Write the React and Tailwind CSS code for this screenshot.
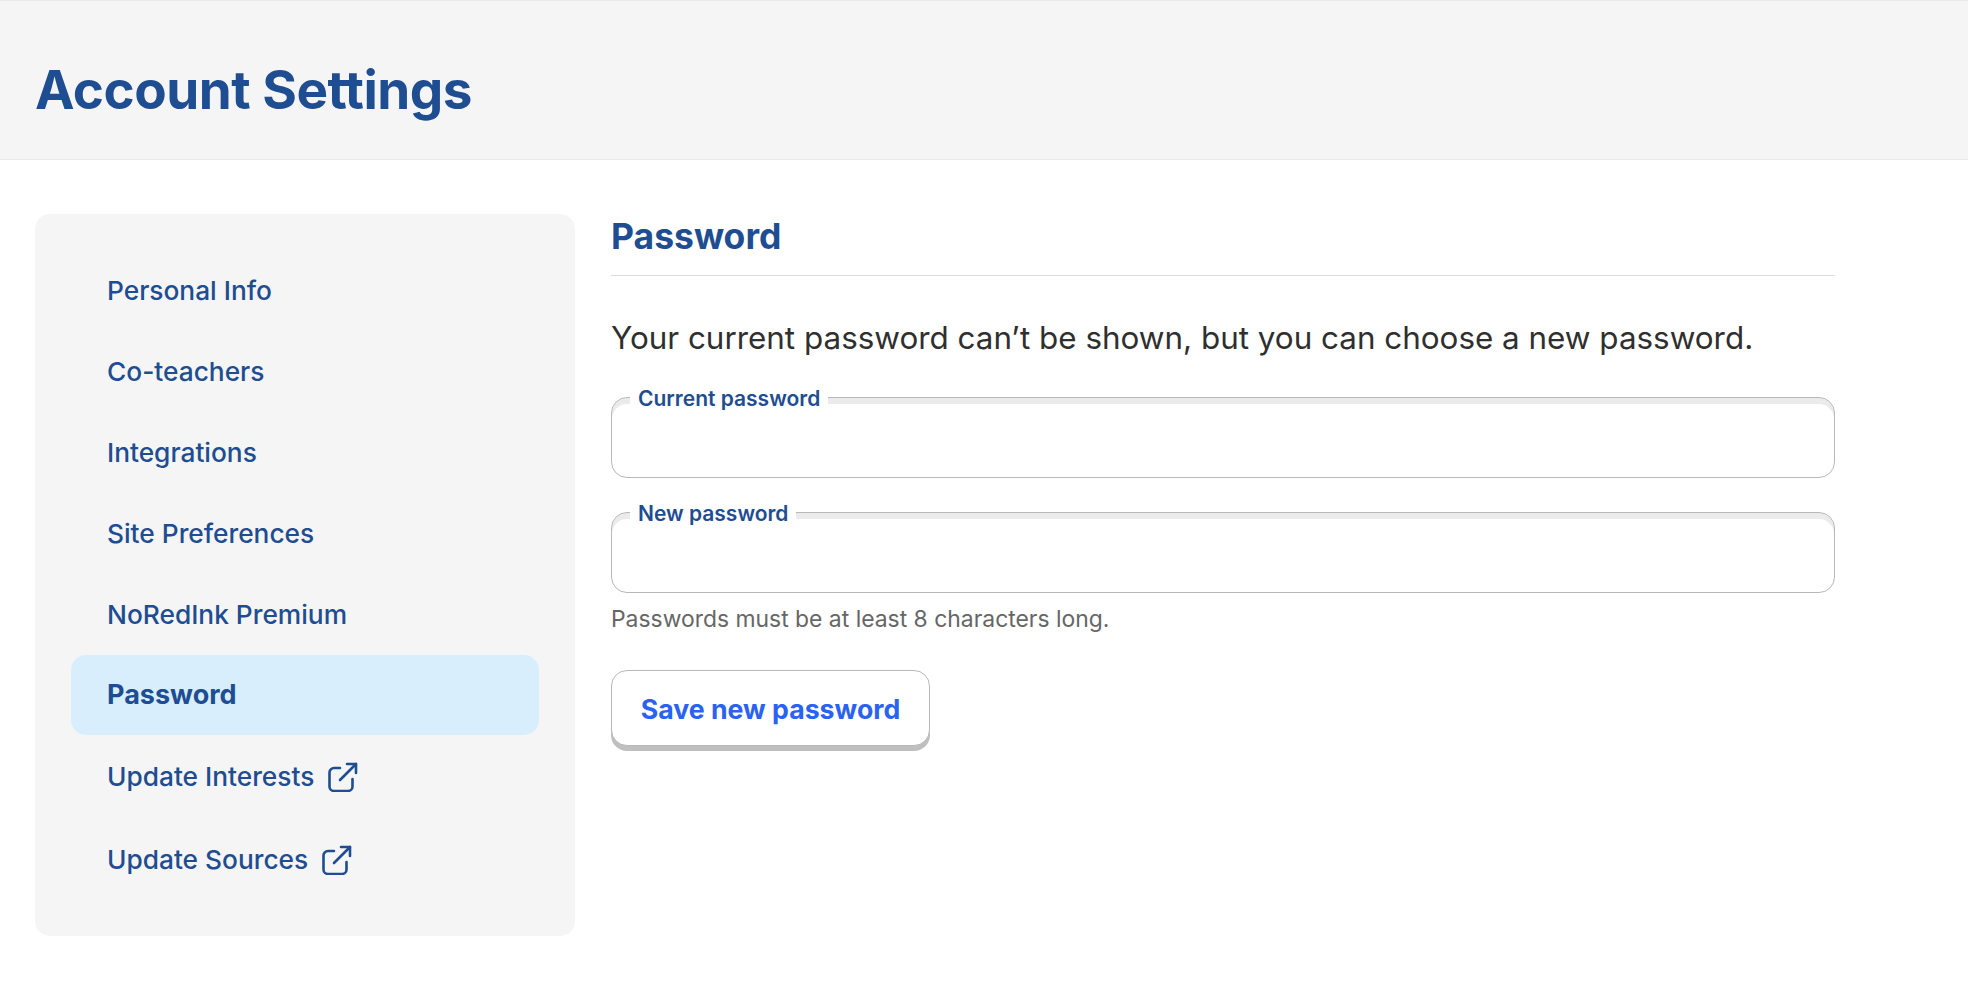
const NAV_ITEMS = [
    { label: 'Personal Info' },
    { label: 'Co-teachers' },
    { label: 'Integrations' },
    { label: 'Site Preferences' },
    { label: 'NoRedInk Premium' },
    { label: 'Password', active: true },
    { label: 'Update Interests', external: true },
    { label: 'Update Sources', external: true }
];

function ExternalIcon() {
    return (
        <svg width="30" height="30" viewBox="0 0 30 30" fill="none" stroke="currentColor" strokeWidth="2.6" strokeLinecap="round" strokeLinejoin="round" className="ml-[14px] shrink-0">
            <path d="M12 6H6a4.5 4.5 0 0 0-4.5 4.5v14A4.5 4.5 0 0 0 6 29h14a4.5 4.5 0 0 0 4.5-4.5V17" />
            <path d="M12 18L28 2" />
            <path d="M19 2h9v9" />
        </svg>
    );
}

function PasswordField({ label }) {
    return (
        <div className="relative h-[81px] rounded-[16px] border-[1.5px] border-[#b8b8b8] bg-white shadow-[inset_0_6px_0_0_#ebebeb]">
            <span className="absolute left-[18px] top-[-13px] bg-white px-2 text-[21px] leading-[28px] font-semibold text-[#1e4d91]">
                {label}
            </span>
        </div>
    );
}

export default function App() {
    return (
        <div className="min-h-[982px] bg-white font-['Inter','Liberation_Sans',sans-serif]">
            <header className="flex h-[160px] items-center border-y border-[#e9e9e9] bg-[#f5f5f5] pl-[35px] pt-[22px]">
                <h1 className="text-[53px] font-bold tracking-[-0.5px] text-[#1e4d91]">Account Settings</h1>
            </header>

            <main className="flex items-start pl-[35px] pt-[54px]">
                <nav className="flex w-[540px] flex-col gap-[1px] rounded-[15px] bg-[#f5f5f5] px-[36px] pt-[36px] pb-[35px]">
                    {NAV_ITEMS.map(({ label, active, external }) => (
                        <a
                            key={label}
                            className={`flex items-center rounded-[15px] pl-[36px] text-[#1e4d91] ${
                                external ? 'h-[82px]' : 'h-[80px]'
                            } ${active ? 'bg-[#d9eefd] text-[27px] font-bold' : 'text-[26.3px] font-medium'} ${
                                active || external ? '' : 'pt-[2px]'
                            }`}
                        >
                            {label}
                            {external && <ExternalIcon />}
                        </a>
                    ))}
                </nav>

                <section className="ml-[36px] w-[1224px]">
                    <h2 className="border-b border-[#dcdcdc] pt-[1px] pb-[16px] text-[35.5px] leading-[44px] font-bold text-[#1e4d91]">
                        Password
                    </h2>
                    <p className="mt-[42px] text-[31.4px] leading-[40px] text-[#2f2f2f]">
                        Your current password can’t be shown, but you can choose a new password.
                    </p>
                    <div className="mt-[39px]">
                        <PasswordField label="Current password" />
                    </div>
                    <div className="mt-[34px]">
                        <PasswordField label="New password" />
                    </div>
                    <p className="mt-[11px] text-[22.9px] leading-[30px] text-[#666666]">
                        Passwords must be at least 8 characters long.
                    </p>
                    <button
                        type="button"
                        className="mt-[36px] block h-[76px] w-[319px] rounded-[16px] border-[1.5px] border-[#b8b8b8] bg-white pt-[2px] text-[26.7px] font-bold text-[#2a62f5] shadow-[0_5px_0_0_#bfbfbf]"
                    >
                        Save new password
                    </button>
                </section>
            </main>
        </div>
    );
}
